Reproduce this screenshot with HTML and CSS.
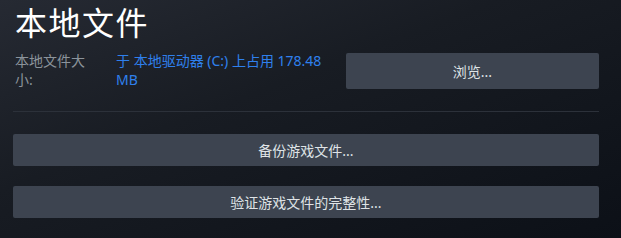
FILE: index.html
```html
<!DOCTYPE html>
<html lang="zh-CN">
<head>
    <meta charset="UTF-8">
    <title>本地文件</title>
    <link rel="stylesheet" href="styles.css">
</head>
<body>
    <div class="panel">
        <h1 class="title">本地文件</h1>

        <div class="info-row">
            <div class="info-label">本地文件大小:</div>
            <div class="info-value">于 本地驱动器 (C:) 上占用 178.48 MB</div>
            <button class="btn btn-browse">浏览...</button>
        </div>

        <div class="separator"></div>

        <div class="actions">
            <button class="btn btn-wide">备份游戏文件...</button>
            <button class="btn btn-wide">验证游戏文件的完整性...</button>
        </div>
    </div>
</body>
</html>
```

FILE: styles.css
```css
html, body {
    margin: 0;
    padding: 0;
    height: 100%;
}

body {
    font-family: "Noto Sans", "Noto Sans CJK SC", Arial, sans-serif;
    background: linear-gradient(to bottom right, #262a33 0%, #181c23 40%, #0c1017 100%);
    color: #dfe3e6;
    overflow: hidden;
}

.panel {
    padding: 0 22px 0 13px;
}

.title {
    margin: 0;
    padding-left: 2px;
    font-size: 32px;
    font-weight: normal;
    line-height: 46px;
    color: #ffffff;
    letter-spacing: 1.5px;
}

.info-row {
    display: flex;
    align-items: flex-start;
    margin-top: 5px;
}

.info-label {
    width: 80px;
    padding-left: 2px;
    font-size: 14px;
    line-height: 19px;
    color: #8b939b;
}

.info-value {
    width: 224px;
    margin-left: 21px;
    font-size: 14px;
    line-height: 19px;
    color: #2f80ed;
}

.btn {
    font-family: inherit;
    font-size: 14px;
    color: #dfe3e6;
    background-color: #3d4450;
    border: none;
    border-radius: 2px;
    cursor: pointer;
}

.btn-browse {
    margin-left: auto;
    margin-top: 2px;
    width: 253px;
    height: 36px;
}

.separator {
    height: 1px;
    background-color: #2c313a;
    margin-top: 22px;
}

.actions {
    display: flex;
    flex-direction: column;
    gap: 20px;
    margin-top: 22px;
}

.btn-wide {
    width: 100%;
    height: 32px;
}
```
